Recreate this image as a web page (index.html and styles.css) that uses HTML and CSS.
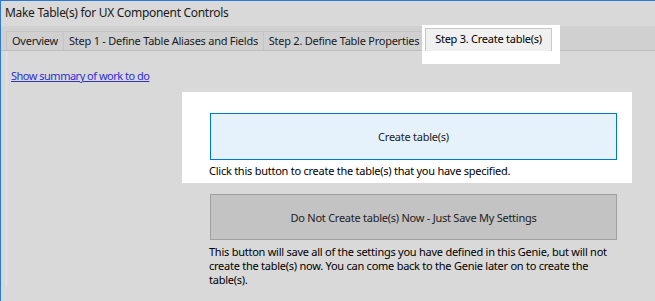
FILE: index.html
```html
<!DOCTYPE html>
<html lang="en">
<head>
    <meta charset="UTF-8">
    <title>Make Table(s) for UX Component Controls</title>
    <link rel="stylesheet" href="styles.css">
</head>
<body>

<div class="window">
    <div class="title">Make Table(s) for UX Component Controls</div>

    <!-- Tab strip -->
    <div class="tabs">
        <div class="tab tab-overview">Overview</div>
        <div class="tab tab-step1">Step 1 - Define Table Aliases and Fields</div>
        <div class="tab tab-step2">Step 2. Define Table Properties</div>
        <div class="tab tab-step3 active">Step 3. Create table(s)</div>
    </div>

    <!-- Page for step 3 -->
    <div class="page">
        <a href="#" class="summary-link">Show summary of work to do</a>

        <div class="actions">
            <div class="highlight">
                <button class="btn btn-create">Create table(s)</button>
                <p class="hint">Click this button to create the table(s) that you have specified.</p>
            </div>

            <button class="btn btn-save">Do Not Create table(s) Now - Just Save My Settings</button>
            <p class="hint">This button will save all of the settings you have defined in this Genie, but will not create the table(s) now. You can come back to the Genie later on to create the table(s).</p>
        </div>
    </div>
</div>

</body>
</html>
```

FILE: styles.css
```css
body {
    margin: 0;
    padding: 0;
    font-family: "Noto Sans", "Open Sans", Arial, sans-serif;
    font-size: 11px;
    letter-spacing: -0.25px;
    color: #000;
    background-color: #d9d9d9;
    overflow: hidden;
}

.window {
    width: 654px;
    height: 300px;
    border-top: 1px solid #2b7bd3;
    border-left: 1px solid #2b7bd3;
    background-color: #d9d9d9;
}

.title {
    height: 25px;
    line-height: 23px;
    padding-left: 4px;
    font-size: 12px;
    letter-spacing: -0.3px;
    color: #1a1a1a;
}

.tabs {
    display: flex;
    align-items: flex-end;
    height: 24px;
    padding-left: 5px;
    background-color: #d0d0d0;
    border-bottom: 1px solid #bdbdbd;
}

.tab {
    position: relative;
    z-index: 1;
    box-sizing: border-box;
    height: 19px;
    line-height: 18px;
    text-align: center;
    color: #1a1a1a;
    border: 1px solid #c4c4c4;
    border-bottom: none;
    border-left: none;
    white-space: nowrap;
}

.tab-overview {
    width: 58px;
    border-left: 1px solid #c4c4c4;
}

.tab-step1 {
    width: 200px;
}

.tab-step2 {
    width: 161px;
}

.tab-step3 {
    width: 127px;
}

.tab.active {
    height: 23px;
    line-height: 19px;
    margin-bottom: -1px;
    color: #000;
    background-color: #f0f0f0;
    border: 1px solid #c8c8c8;
    border-bottom: none;
    box-shadow: -3px -3px 0 0 #fff, 8px -3px 0 0 #fff, -3px 13px 0 0 #fff, 8px 13px 0 0 #fff,
                0 13px 0 0 #fff;
}

.page {
    margin-left: 5px;
    border-left: 1px solid #e6e6e6;
    padding: 18px 0 0 4px;
}

.summary-link {
    display: block;
    width: max-content;
    line-height: 14px;
    letter-spacing: -0.5px;
    color: #2f2fd6;
}

.actions {
    margin-left: 199px;
    width: 407px;
}

.highlight {
    margin: 9px -15px 0 -28px;
    padding: 21px 15px 5px 28px;
    background-color: #fff;
}

.btn {
    display: block;
    box-sizing: border-box;
    width: 407px;
    font-family: inherit;
    font-size: 11px;
    letter-spacing: -0.25px;
    color: #222;
}

.btn-create {
    height: 47px;
    background-color: #e5f1fb;
    border: 1px solid #0078d7;
}

.btn-save {
    height: 46px;
    margin-top: 11px;
    background-color: #c3c3c3;
    border: 1px solid #a0a0a0;
}

.hint {
    margin: 4px 0 0 -1px;
    line-height: 14px;
}

.btn-save + .hint {
    margin-top: 5px;
}
```
